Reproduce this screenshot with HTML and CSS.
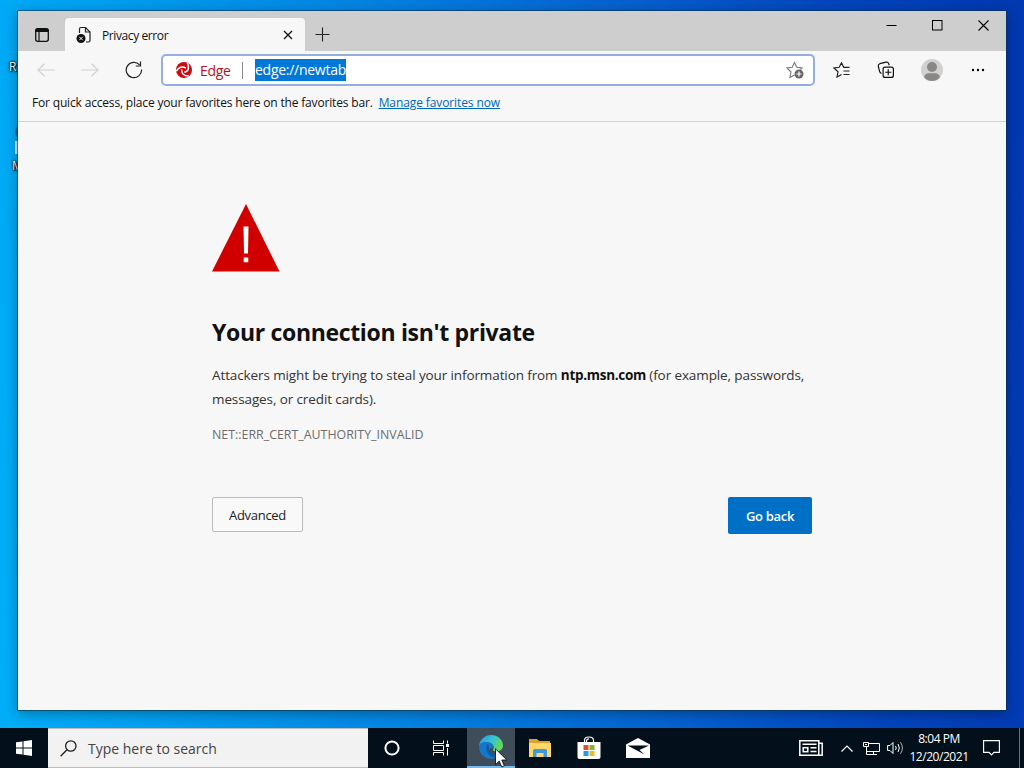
FILE: index.html
```html
<!DOCTYPE html>
<html lang="en">

<head>
    <meta charset="UTF-8">
    <meta name="viewport" content="width=device-width, initial-scale=1.0">
    <title>Privacy error</title>
    <link rel="stylesheet" href="styles.css">
</head>

<body>
    <div class="desktop">
        <span class="shortcut shortcut-bin">R</span>
        <span class="shortcut-edge"></span>
        <span class="shortcut-page"></span>
        <span class="shortcut shortcut-ms">M</span>

        <div class="window">
            <div class="titlebar">
                <div class="tab-menu">
                    <svg width="16" height="16" viewBox="0 0 16 16">
                        <rect x="1.7" y="1.7" width="12.6" height="12.6" rx="2" fill="none" stroke="#111" stroke-width="1.3"/>
                        <path d="M1.5 3.2Q1.5 1.5 3.2 1.5H12.8Q14.5 1.5 14.5 3.2V5H1.5Z" fill="#111"/>
                        <path d="M5 5V14" stroke="#111" stroke-width="1.2"/>
                    </svg>
                </div>
                <div class="tab">
                    <svg width="16" height="18" viewBox="0 0 16 18">
                        <path d="M3.5 7V3Q3.5 1.5 5 1.5H9.5L14 6V14.5Q14 16 12.5 16H10" fill="none" stroke="#222" stroke-width="1.2"/>
                        <path d="M9.5 1.5V6H14" fill="none" stroke="#222" stroke-width="1.2"/>
                        <circle cx="5" cy="12.5" r="4.5" fill="#111"/>
                        <path d="M3.3 10.8L6.7 14.2M6.7 10.8L3.3 14.2" stroke="#fff" stroke-width="1"/>
                    </svg>
                    <span class="tab-title">Privacy error</span>
                    <svg class="tab-close" width="10" height="10" viewBox="0 0 10 10">
                        <path d="M1 1L9 9M9 1L1 9" stroke="#111" stroke-width="1.3"/>
                    </svg>
                </div>
                <div class="new-tab">
                    <svg width="15" height="15" viewBox="0 0 15 15">
                        <path d="M7.5 .5V14.5M.5 7.5H14.5" stroke="#222" stroke-width="1.1"/>
                    </svg>
                </div>
                <div class="window-buttons">
                    <span><svg width="11" height="11" viewBox="0 0 11 11"><path d="M.5 5.5H10.5" stroke="#000"/></svg></span>
                    <span><svg width="11" height="11" viewBox="0 0 11 11"><rect x=".5" y=".5" width="9.5" height="9.5" fill="none" stroke="#000"/></svg></span>
                    <span><svg width="11" height="11" viewBox="0 0 11 11"><path d="M.5 .5L10.5 10.5M10.5 .5L.5 10.5" stroke="#000" stroke-width="1.1"/></svg></span>
                </div>
            </div>

            <div class="toolbar">
                <span class="tool">
                    <svg width="18" height="14" viewBox="0 0 18 14"><path d="M18 7H1M7.5 .7L1 7L7.5 13.3" fill="none" stroke="#d2d2d2" stroke-width="1.2"/></svg>
                </span>
                <span class="tool">
                    <svg width="18" height="14" viewBox="0 0 18 14"><path d="M0 7H17M10.5 .7L17 7L10.5 13.3" fill="none" stroke="#d2d2d2" stroke-width="1.2"/></svg>
                </span>
                <span class="tool">
                    <svg width="18" height="18" viewBox="0 0 18 18">
                        <path d="M16.6 8.5A7.7 7.7 0 1 1 14.6 3.8M15.5 .5V5H10.8" fill="none" stroke="#222" stroke-width="1.2"/>
                    </svg>
                </span>
                <div class="address">
                    <svg width="16" height="16" viewBox="0 0 16 16">
                        <circle cx="8" cy="8" r="8" fill="#c90b14"/>
                        <g fill="none" stroke="#fff" stroke-width="1.5">
                            <path d="M9.8 6.2C6.500 3.900 2.500 5.200 .4 9.200"/>
                            <path d="M5.700 7.300C5 11.500 8 14.200 12.800 14"/>
                            <path d="M8.400 10.200C12.500 9.500 13.800 5.500 11.300 .8"/>
                        </g>
                    </svg>
                    <span class="site">Edge</span>
                    <span class="url">edge://newtab</span>
                    <svg class="add-favorite" width="18" height="18" viewBox="0 0 18 18">
                        <path d="M8.500 14L4 16.500L5 11L1 7L6.200 6.300L8.500 1.500L10.800 6.300L16 7L14.500 8.500" fill="none" stroke="#777" stroke-width="1.1"/>
                        <circle cx="13" cy="13" r="4.5" fill="#666"/>
                        <path d="M13 10.500V15.500M10.500 13H15.500" stroke="#fff" stroke-width="1.2"/>
                    </svg>
                </div>
                <span class="tool">
                    <svg width="18" height="16" viewBox="0 0 18 16">
                        <path d="M8.500 12.500L4 15L5 9.800L1 6L6.200 5.300L8.500 .8L10.800 5.300H16.500M10.500 9H16.500M10.500 12.500H16.500" fill="none" stroke="#222" stroke-width="1.2"/>
                    </svg>
                </span>
                <span class="tool">
                    <svg width="18" height="18" viewBox="0 0 18 18">
                        <rect x="6.1" y="6.1" width="10.3" height="10.3" rx="2" fill="none" stroke="#111" stroke-width="1.2"/>
                        <path d="M11.250 8.200V14.300M8.200 11.250H14.300" stroke="#111" stroke-width="1.2"/>
                        <path d="M4.500 12.300Q3 12 2.600 10.300L1.300 5.300Q1 3.300 2.800 2.700L9 1.200Q11 .8 11.700 2.600L12.200 4.200" fill="none" stroke="#111" stroke-width="1.2"/>
                    </svg>
                </span>
                <span class="tool profile">
                    <svg width="22" height="22" viewBox="0 0 22 22">
                        <circle cx="11" cy="11" r="11" fill="#d2d0ce"/>
                        <circle cx="11" cy="8" r="5" fill="#8a8886"/>
                        <path d="M3 18.500Q4 14.300 8 14.300H14Q18 14.300 19 18.500Q15.500 22 11 22T3 18.500Z" fill="#8a8886"/>
                    </svg>
                </span>
                <span class="tool">
                    <svg width="14" height="4" viewBox="0 0 14 4">
                        <circle cx="2" cy="2" r="1.2"/><circle cx="7" cy="2" r="1.2"/><circle cx="12" cy="2" r="1.2"/>
                    </svg>
                </span>
            </div>

            <div class="favorites">
                <span class="favorites-text">For quick access, place your favorites here on the favorites bar.</span>
                <a class="favorites-link" href="#">Manage favorites now</a>
            </div>

            <div class="page">
                <svg class="warning" width="68" height="68" viewBox="0 0 68 68">
                    <path d="M34 0L67.500 67.500H0Z" fill="#d00000"/>
                    <path d="M31.500 22.500H36.500L36 49.500H32ZM31.700 53.500H36.300V58.300H31.700Z" fill="#fff"/>
                </svg>
                <h1>Your connection isn't private</h1>
                <p class="message">Attackers might be trying to steal your information from <strong>ntp.msn.com</strong> (for example, passwords,<br>messages, or credit cards).</p>
                <p class="code">NET::ERR_CERT_AUTHORITY_INVALID</p>
                <div class="actions">
                    <button class="btn">Advanced</button>
                    <button class="btn btn-primary">Go back</button>
                </div>
            </div>
        </div>
    </div>

    <div class="taskbar">
        <div class="start">
            <svg width="16" height="16" viewBox="0 0 16 16">
                <path d="M0 2.300L6.500 1.400V7.500H0ZM7.500 1.200L16 0V7.500H7.500ZM0 8.500H6.500V14.600L0 13.700ZM7.500 8.500H16V16L7.500 14.800Z" fill="#fff"/>
            </svg>
        </div>
        <div class="search">
            <svg width="17" height="17" viewBox="0 0 17 17">
                <circle cx="10.8" cy="6" r="5.2" fill="none" stroke="#222" stroke-width="1.3"/>
                <path d="M7 9.800L.6 16.200" stroke="#222" stroke-width="1.3"/>
            </svg>
            <span>Type here to search</span>
        </div>
        <div class="task">
            <svg width="16" height="16" viewBox="0 0 16 16"><circle cx="8" cy="8" r="6.6" fill="none" stroke="#fff" stroke-width="2"/></svg>
        </div>
        <div class="task">
            <svg width="17" height="16" viewBox="0 0 17 16">
                <path d="M1.500 .5V3.500H11.500V.5M1.500 15.500V12.500H11.500V15.500M1.500 5.500H11.500V10.500H1.500ZM15.500 .5V3.500M15.500 8V15.500" fill="none" stroke="#fff"/>
                <rect x="14" y="4" width="3" height="3" fill="#fff"/>
            </svg>
        </div>
        <div class="task task-active">
            <svg width="24" height="24" viewBox="0 0 24 24">
                <defs>
                    <linearGradient id="swirl" x1="0" y1="0" x2="1" y2="0.4">
                        <stop offset="0" stop-color="#2496e0"/>
                        <stop offset="0.55" stop-color="#35c1d7"/>
                        <stop offset="1" stop-color="#62d957"/>
                    </linearGradient>
                </defs>
                <path d="M0 11C1 4 6 0 12 0C19 0 24 5 24 10.500C24 14 21 16.500 17.500 16.500C15 16.500 13.500 15.500 14 14.500C16 12 14 8 9 7.500C5 7.200 1.500 9 0 11Z" fill="url(#swirl)"/>
                <path d="M0 12C0 8 4 6.500 8 7C12 7.300 15 10 14.500 13C13 12 10 13 10.500 17C11 21 15 22.500 18 21.500C15.500 24 12 24.300 9 23.500C4 22 0 17.500 0 12Z" fill="#1676cb"/>
                <path d="M9 8.500C5.500 12 7.500 21 15 22.300C18 22.500 21 20.500 22.500 17.500C18 20 11.500 18.500 10.500 14.500Z" fill="#145a9c"/>
            </svg>
        </div>
        <div class="task">
            <svg width="22" height="20" viewBox="0 0 22 20">
                <path d="M0 1H8L10 3H21V19H0Z" fill="#dca32d"/>
                <path d="M0 5H22V19H0Z" fill="#ffd768"/>
                <path d="M4 19V12.500Q4 11 5.500 11H16.500Q18 11 18 12.500V19H14.500V15H7.500V19Z" fill="#3d9bdb"/>
            </svg>
        </div>
        <div class="task">
            <svg width="24" height="24" viewBox="0 0 24 24">
                <path d="M7.500 7V4.500Q7.500 1 12 1T16.500 4.500V7M9.500 7V4.500Q10 2.800 12 2.800" fill="none" stroke="#fff" stroke-width="1.2"/>
                <path d="M.5 6H23.500V21Q23.500 23 21.500 23H2.500Q.5 23 .5 21Z" fill="#fff"/>
                <path d="M6.500 9H11.500V14H6.500Z" fill="#e84c2b"/>
                <path d="M12.500 9H17.500V14H12.500Z" fill="#7db928"/>
                <path d="M6.500 15H11.500V20H6.500Z" fill="#1a9fe0"/>
                <path d="M12.500 15H17.500V20H12.500Z" fill="#f5b71a"/>
            </svg>
        </div>
        <div class="task">
            <svg width="24" height="20" viewBox="0 0 24 20">
                <path d="M0 6.500L12 0L24 6.500V20H0Z" fill="#fff"/>
                <path d="M1.500 7.500H23L13.500 12L18.500 16.500Z" fill="#03101b"/>
            </svg>
        </div>

        <div class="tray">
            <span class="tray-news">
                <svg width="24" height="16" viewBox="0 0 24 16">
                    <path d="M.8 .8H19.800V15.200H.8ZM19.800 3.200H23.200V15.200H19.800" fill="none" stroke="#fff" stroke-width="1.5"/>
                    <path d="M3.500 4.300H17.500M11.500 7.800H17.500M11.500 11.500H17.500" stroke="#fff" stroke-width="1.5"/>
                    <rect x="4.200" y="7.700" width="4.600" height="4" fill="none" stroke="#fff" stroke-width="1.5"/>
                </svg>
            </span>
            <span class="tray-icon">
                <svg width="12" height="7" viewBox="0 0 12 7"><path d="M.5 6.500L6 1L11.500 6.500" fill="none" stroke="#fff" stroke-width="1.2"/></svg>
            </span>
            <span class="tray-icon">
                <svg width="17" height="14" viewBox="0 0 17 14">
                    <path d="M5.500 2.500H16.500V10.500H3.500V6M10.500 10.500V13M6 13.500H14M.5 1.500H5.500V5.500H.5ZM3.500 5.500V13.500H6M2 3.500H4" fill="none" stroke="#fff"/>
                </svg>
            </span>
            <span class="tray-icon">
                <svg width="18" height="14" viewBox="0 0 18 14">
                    <path d="M1.600 4.500H4L7 1.500V12.500L4 9.500H1.600Z" fill="none" stroke="#fff"/>
                    <path d="M9.500 5Q11 7 9.500 9M12 3Q14.700 7 12 11" fill="none" stroke="#fff"/>
                    <path d="M14.500 1.200Q18.300 7 14.500 12.800" fill="none" stroke="#aab0b5"/>
                </svg>
            </span>
            <div class="clock">
                <span class="time">8:04 PM</span>
                <span class="date">12/20/2021</span>
            </div>
            <span class="tray-action">
                <svg width="17" height="16" viewBox="0 0 17 16"><path d="M.6 .6H16.400V12.400H11L8.500 15L6 12.400H.6Z" fill="none" stroke="#fff" stroke-width="1.1"/></svg>
            </span>
            <span class="show-desktop"></span>
        </div>
    </div>

    <svg class="cursor" width="13" height="20" viewBox="0 0 13 20">
        <path d="M.5 .8V16.500L4.200 13L6.800 18.900L9.300 17.800L6.800 12H11.800Z" fill="#fff" stroke="#000" stroke-width=".8"/>
    </svg>
</body>

</html>
```
FILE: styles.css
```css
* {
    box-sizing: border-box;
}

body {
    margin: 0;
    width: 1024px;
    height: 768px;
    overflow: hidden;
    font-family: "Open Sans", "Noto Sans", sans-serif;
    font-size: 12px;
    color: #111;
    white-space: nowrap;
}

svg {
    display: block;
    flex-shrink: 0;
}

.desktop {
    position: relative;
    height: 728px;
    padding: 11px 18px 18px;
    background: linear-gradient(86deg, #00aef8 0%, #009ff0 15%, #0484e2 38%, #0562cf 62%, #0345bd 82%, #0238b0 100%);
}

/* desktop icons, mostly hidden behind the window */
.shortcut {
    position: absolute;
    color: #fff;
    text-shadow: 1px 1px 1px #000, 0 0 2px #000, 0 0 3px #000;
}

.shortcut-bin {
    left: 9px;
    top: 58px;
}

.shortcut-ms {
    left: 12px;
    top: 157px;
}

.shortcut-edge {
    position: absolute;
    left: 15px;
    top: 124px;
    width: 8px;
    height: 16px;
    border-radius: 8px 0 0 8px;
    background: #0b6bb5;
}

.shortcut-page {
    position: absolute;
    left: 15px;
    top: 141px;
    width: 8px;
    height: 13px;
    background: #cfeafa;
}

.window {
    position: relative;
    display: flex;
    flex-direction: column;
    height: 699px;
    background: #f7f7f7;
    box-shadow: 0 0 0 1px rgba(10, 50, 80, 0.6), 0 3px 12px rgba(0, 0, 0, 0.35);
}

.titlebar {
    display: flex;
    height: 40px;
    background: #cecece;
}

.tab-menu {
    display: flex;
    align-items: center;
    justify-content: center;
    width: 47px;
    padding-top: 8px;
    padding-left: 1px;
}

.tab {
    display: flex;
    align-items: center;
    width: 240px;
    height: 33px;
    margin-top: 7px;
    padding: 1px 12px 0 11px;
    background: #f7f7f7;
    border-radius: 4px 4px 0 0;
}

.tab-title {
    flex: 1;
    margin-left: 10px;
    letter-spacing: -0.4px;
}

.new-tab {
    padding: 16px 0 0 10px;
}

.window-buttons {
    display: flex;
    margin-left: auto;
}

.window-buttons span {
    display: flex;
    justify-content: center;
    width: 46px;
    padding-top: 9px;
}

.toolbar {
    display: flex;
    align-items: center;
    height: 38px;
    padding: 0 6px;
}

.tool {
    display: flex;
    align-items: center;
    justify-content: center;
    width: 44px;
}

.profile {
    width: 48px;
}

.address {
    display: flex;
    align-items: center;
    width: 654px;
    height: 32px;
    margin: 0 5px;
    padding: 0 9px 0 13px;
    background: #fff;
    border: 2px solid #93aedf;
    border-radius: 5px;
    font-size: 14px;
}

.site {
    width: 43px;
    margin-left: 8px;
    border-right: 1px solid #888;
    line-height: 17px;
    letter-spacing: -0.3px;
    color: #b5121b;
}

.url {
    margin-left: 12px;
    background: #0078d7;
    color: #fff;
    line-height: 22px;
    letter-spacing: -0.27px;
}

.add-favorite {
    margin-left: auto;
}

.favorites {
    display: flex;
    height: 33px;
    padding: 5px 14px 0;
    border-bottom: 1px solid #d2d2d2;
}

.favorites-text {
    letter-spacing: -0.17px;
}

.favorites-link {
    margin-left: 6px;
    letter-spacing: -0.1px;
    color: #0067b8;
}

.page {
    display: flex;
    flex-direction: column;
    width: 600px;
    margin-left: 194px;
    padding-top: 82px;
}

h1 {
    margin: 42px 0 0;
    font-size: 23px;
    font-weight: 700;
    line-height: 36px;
    letter-spacing: -0.33px;
}

.message {
    margin: 13px 0 0;
    font-size: 13.5px;
    line-height: 24px;
    letter-spacing: -0.11px;
    color: #333;
}

.message strong {
    font-weight: 700;
    letter-spacing: -0.3px;
    color: #111;
}

.code {
    margin: 14px 0 0;
    font-size: 12.4px;
    line-height: 20px;
    color: #6d6d6d;
}

.actions {
    display: flex;
    justify-content: space-between;
    align-items: flex-start;
    margin-top: 52px;
}

.btn {
    width: 91px;
    height: 35px;
    padding: 0;
    background: #f9f9f9;
    border: 1px solid #bbb;
    border-radius: 2px;
    font-family: inherit;
    font-size: 13px;
    letter-spacing: -0.3px;
    color: #222;
}

.btn-primary {
    width: 84px;
    height: 37px;
    background: #0070c6;
    border: none;
    font-weight: 600;
    color: #fff;
}

.taskbar {
    display: flex;
    height: 40px;
    background: #03101b;
    color: #fff;
}

.start {
    display: flex;
    align-items: center;
    justify-content: center;
    width: 48px;
}

.search {
    display: flex;
    align-items: center;
    gap: 11px;
    width: 320px;
    padding-left: 12px;
    background: #f2f2f2;
    border: 1px solid #bbb;
    border-width: 1px 0;
    font-size: 14px;
    color: #444;
}

.task {
    display: flex;
    align-items: center;
    justify-content: center;
    width: 48px;
    margin-right: 1px;
}

.search + .task {
    margin-right: 0;
}

.task-active {
    margin-left: 2px;
    background: #3e4d59;
    border-bottom: 2px solid #76b9ed;
}

.tray {
    display: flex;
    align-items: center;
    margin-left: auto;
}

.tray-icon {
    display: flex;
    justify-content: center;
    width: 24px;
}

.tray-news {
    margin-right: 12px;
}

.clock {
    display: flex;
    flex-direction: column;
    align-items: center;
    width: 64px;
    line-height: 18px;
    letter-spacing: -0.45px;
}

.tray-action {
    display: flex;
    justify-content: center;
    width: 40px;
}

.show-desktop {
    width: 5px;
    height: 40px;
    margin-left: 8px;
    border-left: 1px solid #66717b;
}

.cursor {
    position: absolute;
    left: 495px;
    top: 748px;
}
```
